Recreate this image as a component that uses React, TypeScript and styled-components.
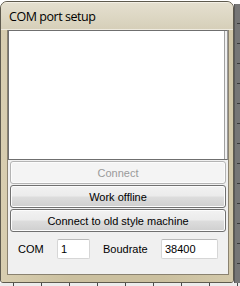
import styled, { createGlobalStyle } from 'styled-components';

const GlobalStyle = createGlobalStyle`
  html, body {
    margin: 0;
    padding: 0;
    width: 240px;
    height: 286px;
    overflow: hidden;
    background: #ffffff;
  }
  * {
    box-sizing: border-box;
  }
`;

// 버튼 목록
const actions = [
  { label: 'Connect', disabled: true },
  { label: 'Work offline', disabled: false },
  { label: 'Connect to old style machine', disabled: false },
];

export default function App() {
  return (
    <>
      <GlobalStyle />
      <Stage>
        <TopRow>
          <Window>
            <TitleBar>
              <Title>COM port setup</Title>
            </TitleBar>
            <FrameBody>
              <Client>
                <ListBox />
                <ButtonStack>
                  {actions.map((action) => (
                    <PushButton key={action.label} disabled={action.disabled}>
                      {action.label}
                    </PushButton>
                  ))}
                </ButtonStack>
                <SettingsRow>
                  <FieldLabel $width={39}>COM</FieldLabel>
                  <TextBox $width={33} defaultValue="1" />
                  <FieldLabel $width={58} $gap={13}>Boudrate</FieldLabel>
                  <TextBox $width={57} defaultValue="38400" />
                </SettingsRow>
              </Client>
            </FrameBody>
          </Window>
          <SideRuler />
        </TopRow>
        <BottomRuler />
      </Stage>
    </>
  );
}

const Stage = styled.div`
  display: flex;
  flex-direction: column;
  width: 240px;
  height: 286px;
  font-family: 'Liberation Sans', Arial, sans-serif;
  font-size: 11px;
  color: #000;
`;

const TopRow = styled.div`
  display: flex;
  height: 283px;
`;

const Window = styled.div`
  display: flex;
  flex-direction: column;
  flex-shrink: 0;
  width: 234px;
  height: 282px;
  margin-top: 1px;
  border: 1px solid #5e5a4e;
  border-radius: 7px 7px 3px 3px;
  background: #cbc09f;
  overflow: hidden;
  box-shadow: inset 1px 0 #e6dfca, inset -1px 0 #e6dfca, inset 0 -1px #e6dfca;
`;

const TitleBar = styled.div`
  display: flex;
  align-items: center;
  height: 28px;
  padding: 1px 0 0 8px;
  background: linear-gradient(to bottom, #e4dfcf 0%, #dcd6c2 60%, #d6cfb9 100%);
  border-top: 1px solid #f4f0e6;
  border-bottom: 1px solid #eeeadf;
`;

const Title = styled.span`
  font-family: 'Open Sans', 'Noto Sans', sans-serif;
  font-size: 12.5px;
  letter-spacing: -0.45px;
  color: #000;
`;

const FrameBody = styled.div`
  flex: 1;
  display: flex;
  padding: 0 4px 7px 6px;
  background: linear-gradient(to right, #d8ceb0, #cbc09f 30%, #cbc09f 70%, #d3c9aa);
`;

const Client = styled.div`
  flex: 1;
  display: flex;
  flex-direction: column;
  background: #f0f0f0;
  border: 1px solid #8a8270;
  border-top: none;
`;

const ListBox = styled.div`
  height: 130px;
  background: #ffffff;
  border: 1px solid #6f6f6f;
  border-right-color: #9a9a9a;
  box-shadow: inset -2px 0 #f0f0f0, inset -3px 0 #a0a0a0;
`;

const ButtonStack = styled.div`
  display: flex;
  flex-direction: column;
  gap: 1px;
  padding: 1px 2px 0 2px;
`;

const PushButton = styled.button`
  height: 23px;
  padding: 0;
  border: 1px solid ${({ disabled }) => (disabled ? '#b4b4b4' : '#707070')};
  border-radius: 3px;
  font-family: inherit;
  font-size: 11px;
  color: ${({ disabled }) => (disabled ? '#9a9a9a' : '#000')};
  background: ${({ disabled }) =>
    disabled
      ? '#f4f4f4'
      : 'linear-gradient(to bottom, #f2f2f2 0%, #ebebeb 48%, #dddddd 52%, #cfcfcf 100%)'};
  box-shadow: inset 0 0 0 1px #fcfcfc;
`;

const SettingsRow = styled.div`
  display: flex;
  align-items: center;
  margin-top: 7px;
  padding-left: 10px;
`;

const FieldLabel = styled.span<{ $width: number; $gap?: number }>`
  width: ${({ $width }) => $width}px;
  margin-left: ${({ $gap }) => $gap ?? 0}px;
  flex-shrink: 0;
`;

const TextBox = styled.input<{ $width: number }>`
  width: ${({ $width }) => $width}px;
  height: 20px;
  padding: 0 0 0 3px;
  border: 1px solid #d6d6d6;
  border-top-color: #b9b9b9;
  border-radius: 2px;
  background: #fff;
  font-family: inherit;
  font-size: 11px;
  color: #000;
  outline: none;
`;

const SideRuler = styled.div`
  flex: 1;
  margin-top: 4px;
  background-color: #767676;
  background-image: repeating-linear-gradient(
    to bottom,
    transparent 0 19px,
    #3c3c3c 19px 20px
  );
  background-size: 3px 100%;
  background-repeat: no-repeat;
  background-position: right top;
  border-left: 1px solid #5a5a5a;
`;

const BottomRuler = styled.div`
  height: 3px;
  background-color: #ececec;
  background-image: repeating-linear-gradient(
    to right,
    transparent 0 13px,
    #4a4a4a 13px 14px,
    transparent 14px 28px
  );
`;
